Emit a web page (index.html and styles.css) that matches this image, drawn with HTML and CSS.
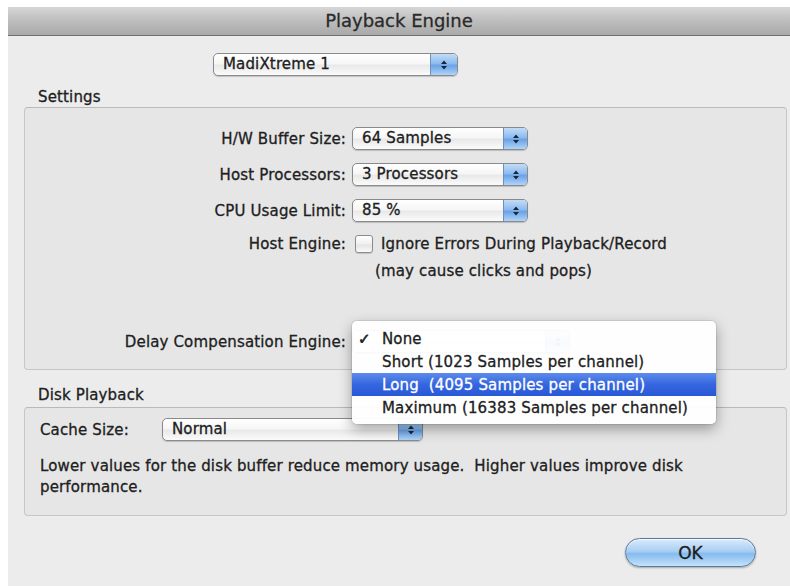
FILE: index.html
```html
<!DOCTYPE html>
<html lang="en">
<head>
<meta charset="utf-8">
<title>Playback Engine</title>
<link rel="stylesheet" href="styles.css">
</head>
<body>
<div class="window">
  <div class="titlebar">Playback Engine</div>
  <div class="content">
    <div class="popup popup-device">
      <span class="popup-text">MadiXtreme 1</span>
      <span class="popup-arrows"><svg width="8" height="12" viewBox="0 0 8 12"><path d="M4 1.5 L7 5 H1 Z M4 10.5 L7 7 H1 Z"/></svg></span>
    </div>

    <div class="group-label">Settings</div>
    <div class="group settings">
      <div class="field">
        <span class="label">H/W Buffer Size:</span>
        <div class="popup popup-mid">
          <span class="popup-text">64 Samples</span>
          <span class="popup-arrows"><svg width="8" height="12" viewBox="0 0 8 12"><path d="M4 1.5 L7 5 H1 Z M4 10.5 L7 7 H1 Z"/></svg></span>
        </div>
      </div>
      <div class="field field-gap">
        <span class="label">Host Processors:</span>
        <div class="popup popup-mid">
          <span class="popup-text">3 Processors</span>
          <span class="popup-arrows"><svg width="8" height="12" viewBox="0 0 8 12"><path d="M4 1.5 L7 5 H1 Z M4 10.5 L7 7 H1 Z"/></svg></span>
        </div>
      </div>
      <div class="field field-gap">
        <span class="label">CPU Usage Limit:</span>
        <div class="popup popup-mid">
          <span class="popup-text">85 %</span>
          <span class="popup-arrows"><svg width="8" height="12" viewBox="0 0 8 12"><path d="M4 1.5 L7 5 H1 Z M4 10.5 L7 7 H1 Z"/></svg></span>
        </div>
      </div>
      <div class="field field-check">
        <span class="label">Host Engine:</span>
        <span class="checkbox"></span>
        <span class="check-text">Ignore Errors During Playback/Record</span>
      </div>
      <div class="hint">(may cause clicks and pops)</div>
      <div class="field field-delay">
        <span class="label">Delay Compensation Engine:</span>
        <!-- the open menu sits over this pop-up, so its title is left blank -->
        <div class="popup popup-delay">
          <span class="popup-text"></span>
          <span class="popup-arrows"><svg width="8" height="12" viewBox="0 0 8 12"><path d="M4 1.5 L7 5 H1 Z M4 10.5 L7 7 H1 Z"/></svg></span>
        </div>
      </div>
    </div>

    <div class="group-label group-label-disk">Disk Playback</div>
    <div class="group disk">
      <div class="cache-row">
        <span class="cache-label">Cache Size:</span>
        <div class="popup popup-cache">
          <span class="popup-text">Normal</span>
          <span class="popup-arrows"><svg width="8" height="12" viewBox="0 0 8 12"><path d="M4 1.5 L7 5 H1 Z M4 10.5 L7 7 H1 Z"/></svg></span>
        </div>
      </div>
      <p class="note">Lower values for the disk buffer reduce memory usage.&nbsp; Higher values improve disk<br>performance.</p>
    </div>

    <div class="actions">
      <button class="ok">OK</button>
    </div>
  </div>

  <ul class="menu">
    <li class="menu-item"><span class="mark">✓</span>None</li>
    <li class="menu-item"><span class="mark"></span>Short (1023 Samples per channel)</li>
    <li class="menu-item selected"><span class="mark"></span>Long  (4095 Samples per channel)</li>
    <li class="menu-item"><span class="mark"></span>Maximum (16383 Samples per channel)</li>
  </ul>
</div>
</body>
</html>
```

FILE: styles.css
```css
html, body {
  margin: 0;
  padding: 0;
  background: #ffffff;
}

body {
  font-family: "DejaVu Sans", "Noto Sans", sans-serif;
  font-size: 15px;
  letter-spacing: 0.15px;
  color: #202020;
  -webkit-text-stroke: 0.3px currentColor;
}

.window {
  position: relative;
  margin: 7px 0 0 8px;
  height: 579px;
  background: #ececec;
  overflow: hidden;
}

/* title bar */
.titlebar {
  height: 28px;
  line-height: 28px;
  text-align: center;
  font-size: 18px;
  letter-spacing: 0;
  color: #2a2a2a;
  background: linear-gradient(#d6d6d6, #bdbdbd 50%, #a9a9a9);
  border-bottom: 1px solid #707070;
}

.content {
  padding: 0 3px 0 16px;
}

/* popup buttons */
.popup {
  display: flex;
  box-sizing: border-box;
  height: 23px;
  border: 1px solid #8a8a8a;
  border-radius: 5px;
  background: linear-gradient(#ffffff, #f6f6f6 45%, #e9e9e9 55%, #fbfbfb);
  box-shadow: 0 1px 1px rgba(0, 0, 0, 0.18);
  overflow: hidden;
}

.popup-text {
  flex: 1;
  padding-left: 9px;
  line-height: 21px;
  white-space: nowrap;
}

.popup-arrows {
  width: 23px;
  display: flex;
  align-items: center;
  justify-content: center;
  border-left: 1px solid #6f8fb8;
  background: linear-gradient(#c3dcf7, #8dbbef 45%, #6aa3e8 55%, #b0d4f8);
}

.popup-arrows path {
  fill: #1d2636;
}

.popup-device {
  margin: 17px 0 0 189px;
  width: 245px;
}

.popup-device .popup-arrows {
  width: 26px;
}

.popup-mid {
  width: 176px;
}

.popup-delay {
  width: 218px;
}

.popup-cache {
  width: 261px;
}

/* group boxes */
.group-label {
  margin-top: 12px;
  padding-left: 14px;
  line-height: 18px;
}

.group-label-disk {
  margin-top: 16px;
}

.group {
  margin-top: 1px;
  border: 1px solid #c6c6c6;
  border-top-color: #b9b9b9;
  border-radius: 4px;
  background: #e6e6e6;
}

.group.disk {
  margin-top: 3px;
  padding: 10px 0 17px 15px;
}

.settings {
  padding: 19px 0 16px 0;
}

.field {
  display: flex;
  align-items: center;
}

.label {
  width: 321px;
  margin-right: 6px;
  text-align: right;
  white-space: nowrap;
}

.field-gap {
  margin-top: 13px;
}

.field-check {
  margin-top: 13px;
  height: 18px;
}

.checkbox {
  box-sizing: border-box;
  width: 18px;
  height: 18px;
  margin-left: 3px;
  border: 1px solid #8c8c8c;
  border-radius: 3px;
  background: linear-gradient(#ffffff, #f0f0f0 50%, #e4e4e4 55%, #fafafa);
  box-shadow: 0 1px 1px rgba(0, 0, 0, 0.15);
}

.check-text {
  margin-left: 8px;
  white-space: nowrap;
}

.hint {
  margin-top: 9px;
  padding-left: 350px;
  line-height: 18px;
}

.field-delay {
  margin-top: 50px;
}

/* disk playback */
.cache-row {
  display: flex;
  align-items: center;
}

.cache-label {
  width: 122px;
}

.note {
  margin: 15px 0 0 0;
  line-height: 21px;
}

/* dialog buttons */
.actions {
  display: flex;
  justify-content: flex-end;
  margin-top: 22px;
  padding-right: 31px;
}

.ok {
  width: 131px;
  height: 29px;
  border: 1px solid #5a79a0;
  border-radius: 15px;
  font-family: inherit;
  font-size: 17px;
  color: #1c1c1c;
  -webkit-text-stroke: 0.3px currentColor;
  background: linear-gradient(#d9eafb, #a9cff4 45%, #86bbee 55%, #c4e2fc);
  box-shadow: 0 1px 2px rgba(0, 0, 0, 0.3), inset 0 1px 1px rgba(255, 255, 255, 0.8);
  padding: 0;
}

/* open pop-up menu */
.menu {
  position: absolute;
  left: 344px;
  top: 314px;
  width: 364px;
  margin: 0;
  padding: 6px 0 5px;
  list-style: none;
  background: rgba(255, 255, 255, 0.95);
  border-radius: 5px;
  box-shadow: 0 5px 14px rgba(0, 0, 0, 0.35), 0 0 0 1px rgba(0, 0, 0, 0.08);
}

.menu-item {
  display: flex;
  align-items: center;
  height: 23px;
  padding-left: 6px;
  white-space: pre;
  color: #202020;
}

.mark {
  width: 24px;
  font-size: 15px;
  -webkit-text-stroke: 0.6px currentColor;
}

.menu-item.selected {
  color: #ffffff;
  background: linear-gradient(#5d8cec, #3566df 50%, #2858d6);
}
```
